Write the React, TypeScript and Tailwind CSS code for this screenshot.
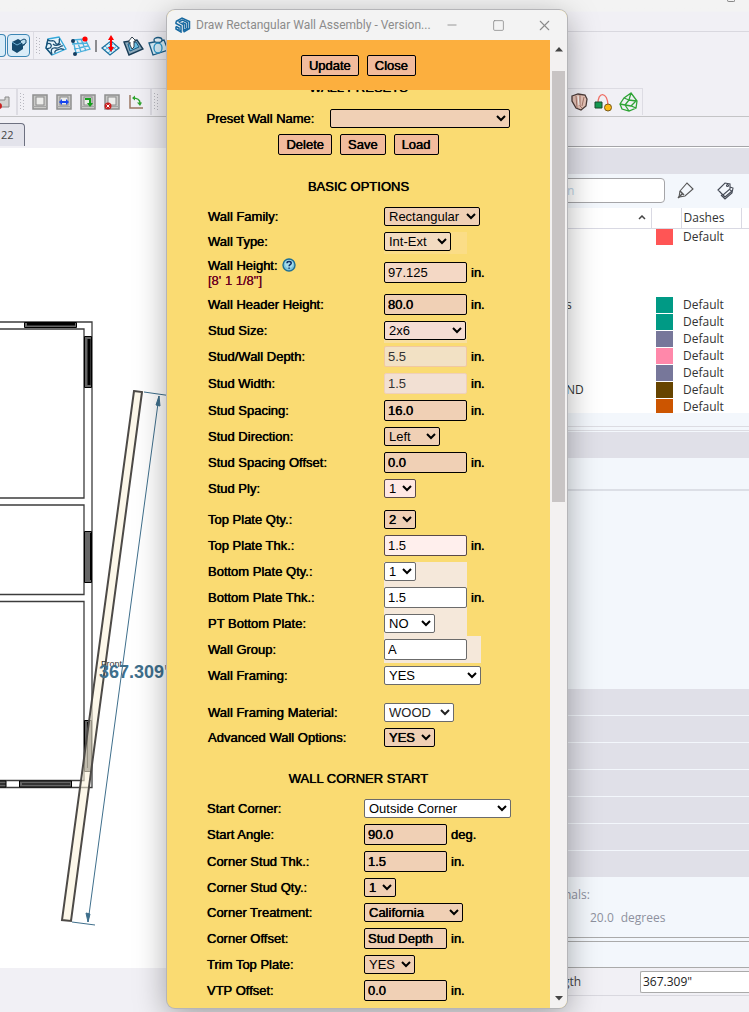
import React from 'react';
import { Minus, Square, X } from 'lucide-react';

type Field = {
  id: string;
  label: string;
  kind: 'select' | 'input';
  value: string;
  look: string;
  unit?: string;
  disabled?: boolean;
  row?: string;
  cell?: string;
};

const PEACH = 'border-black bg-[#f0d0b5]';
const PLAIN = 'border-[#6b6b6b] bg-white';
const HEAVY = 'text-shadow-[0_0_0_#000,0_0_1px_#0008]';

const basicFields: Field[] = [
  { id: 'family', label: 'Wall Family:', kind: 'select', value: 'Rectangular', look: `w-[96px] ${PEACH}` },
  { id: 'type', label: 'Wall Type:', kind: 'select', value: 'Int-Ext', look: 'w-[67px] border-black bg-[#f3dbc1]', cell: 'mt-[3px] items-start w-[83px] bg-[#fbdd87]' },
  { id: 'height', label: 'Wall Height:', kind: 'input', value: '97.125', look: 'border-black bg-[#f4d8c5]', unit: 'in.', row: 'h-[37px]' },
  { id: 'header', label: 'Wall Header Height:', kind: 'input', value: '80.0', look: `${HEAVY} ${PEACH}`, unit: 'in.' },
  { id: 'size', label: 'Stud Size:', kind: 'select', value: '2x6', look: 'w-[82px] border-black bg-[#f5ddd4]', cell: 'mt-[3px] items-start w-[83px] bg-[#f8dfa0]' },
  { id: 'depth', label: 'Stud/Wall Depth:', kind: 'input', value: '5.5', look: 'border-[#f1c8a0] bg-[#f2e1c4] text-[#333]', unit: 'in.', disabled: true },
  { id: 'width', label: 'Stud Width:', kind: 'input', value: '1.5', look: 'border-[#f0d0b8] bg-[#f2e0d3] text-[#333]', unit: 'in.', disabled: true },
  { id: 'spacing', label: 'Stud Spacing:', kind: 'input', value: '16.0', look: `${HEAVY} ${PEACH}`, unit: 'in.' },
  { id: 'direction', label: 'Stud Direction:', kind: 'select', value: 'Left', look: `w-[56px] ${PEACH}` },
  { id: 'offset', label: 'Stud Spacing Offset:', kind: 'input', value: '0.0', look: `${HEAVY} ${PEACH}`, unit: 'in.' },
  { id: 'ply', label: 'Stud Ply:', kind: 'select', value: '1', look: 'w-[32px] border-[#5a4a48] bg-[#ffe8e4]' },
  { id: 'topqty', label: 'Top Plate Qty.:', kind: 'select', value: '2', look: `w-[32px] ${HEAVY} ${PEACH}`, row: 'h-[25px] mt-[6px]' },
  { id: 'topthk', label: 'Top Plate Thk.:', kind: 'input', value: '1.5', look: 'border-[#5a4a48] bg-[#ffefed]', unit: 'in.' },
  { id: 'botqty', label: 'Bottom Plate Qty.:', kind: 'select', value: '1', look: `w-[32px] ${PLAIN}`, cell: 'mt-[3px] items-start w-[83px] bg-[#f5e8da]' },
  { id: 'botthk', label: 'Bottom Plate Thk.:', kind: 'input', value: '1.5', look: PLAIN, unit: 'in.', cell: 'bg-[#f5e8da]' },
  { id: 'pt', label: 'PT Bottom Plate:', kind: 'select', value: 'NO', look: `w-[51px] ${PLAIN}`, cell: 'w-[83px] bg-[#f5e8da]' },
  { id: 'group', label: 'Wall Group:', kind: 'input', value: 'A', look: PLAIN, cell: 'w-[97px] bg-[#f5e8da]' },
  { id: 'framing', label: 'Wall Framing:', kind: 'select', value: 'YES', look: `w-[97px] ${PLAIN}` },
  { id: 'material', label: 'Wall Framing Material:', kind: 'select', value: 'WOOD', look: `w-[70px] text-[#222] ${PLAIN}`, row: 'h-[25px] mt-3' },
  { id: 'advanced', label: 'Advanced Wall Options:', kind: 'select', value: 'YES', look: `w-[51px] ${HEAVY} ${PEACH}` },
];

const cornerFields: Field[] = [
  { id: 'corner', label: 'Start Corner:', kind: 'select', value: 'Outside Corner', look: `w-[147px] ${PLAIN}` },
  { id: 'angle', label: 'Start Angle:', kind: 'input', value: '90.0', look: `${HEAVY} ${PEACH}`, unit: 'deg.' },
  { id: 'cthk', label: 'Corner Stud Thk.:', kind: 'input', value: '1.5', look: `${HEAVY} ${PEACH}`, unit: 'in.' },
  { id: 'cqty', label: 'Corner Stud Qty.:', kind: 'select', value: '1', look: `w-[32px] ${HEAVY} ${PEACH}` },
  { id: 'treatment', label: 'Corner Treatment:', kind: 'select', value: 'California', look: `w-[99px] ${HEAVY} ${PEACH}` },
  { id: 'coffset', label: 'Corner Offset:', kind: 'input', value: 'Stud Depth', look: `${HEAVY} ${PEACH}`, unit: 'in.' },
  { id: 'trim', label: 'Trim Top Plate:', kind: 'select', value: 'YES', look: `w-[51px] ${PEACH}` },
  { id: 'vtp', label: 'VTP Offset:', kind: 'input', value: '0.0', look: `${HEAVY} ${PEACH}`, unit: 'in.' },
];

const HelpIcon = () => (
  <svg width="14" height="14" viewBox="0 0 14 14">
    <circle cx="7" cy="7" r="6" fill="#7fc4dc" stroke="#1f6f93" strokeWidth="1.4" />
    <circle cx="7" cy="6" r="4" fill="#a6dcea" />
    <path d="M5 5.200C5 3 9.200 3 9.200 5.200c0 1.500-2.100 1.500-2.100 3M7.100 9.600v1.200" fill="none" stroke="#0c2c66" strokeWidth="1.500" />
  </svg>
);

const FieldRow: React.FC<{ field: Field; labelWidth: string }> = ({ field, labelWidth }) => {
  const height = field.row ?? (field.kind === 'input' ? 'h-[27px]' : 'h-[25px]');
  return (
    <div className={`flex items-center ${height}`}>
      <div className={`shrink-0 leading-[15px] ${labelWidth}`}>
        <label htmlFor={field.id} className={HEAVY}>{field.label}</label>
        {field.id === 'height' && (
          <>
            <button type="button" aria-label="Help" className="ml-1 align-top"><HelpIcon /></button>
            <div className="text-[#6b0020] text-shadow-[0_0_0_#6b0020]">[8' 1 1/8"]</div>
          </>
        )}
      </div>
      <div className={`flex self-stretch ${field.cell ?? ''} ${field.cell?.includes('items-start') ? '' : 'items-center'}`}>
        {field.kind === 'select' ? (
          <select id={field.id} defaultValue={field.value} className={`h-[19px] rounded-xs border ${field.look}`}>
            <option>{field.value}</option>
          </select>
        ) : (
          <input
            id={field.id}
            type="text"
            defaultValue={field.value}
            disabled={field.disabled}
            className={`h-[21px] w-[83px] rounded-xs border px-[3px] ${field.look}`}
          />
        )}
      </div>
      {field.unit && <span className={`ml-1 ${HEAVY}`}>{field.unit}</span>}
    </div>
  );
};

const FormButton: React.FC<{ children: React.ReactNode }> = ({ children }) => (
  <button type="button" className={`h-[21px] rounded-xs border border-black bg-[#f2bb9c] px-[7px] leading-[19px] ${HEAVY}`}>
    {children}
  </button>
);

const SketchUpLogo = () => (
  <svg width="16" height="16" viewBox="0 0 16 16" fill="none" stroke="#1769a0" strokeWidth="1.500" className="shrink-0">
    <path d="M1 4.500 7 1l7.500 3.500v7L8.500 15" />
    <path d="M1 4.500v2l5 2.500v6L1 12V9.500M3.500 5 7.500 3l5 2.500v6L8.500 13.500v-6L4 5.200" />
    <path d="M7.500 5.500 10.500 7v4.500M1 9.500l3 1.500v2" />
  </svg>
);

const WallDialog = () => (
  <section
    aria-label="Draw Rectangular Wall Assembly"
    className="absolute left-[167px] top-[10px] w-[400px] overflow-hidden rounded-lg bg-[#fadb72] font-['Liberation_Sans',Arial,sans-serif] text-[13px] text-black shadow-[0_0_0_1px_#b5b5b8,0_8px_32px_rgba(0,0,0,0.35)]"
  >
    <header className="flex h-[30px] items-center bg-[#f3f3f3] pl-2 text-[#8b8b8b]">
      <SketchUpLogo />
      <h1 className="ml-[5px] min-w-0 flex-1 whitespace-nowrap font-['Roboto',sans-serif] text-[12px]">Draw Rectangular Wall Assembly - Version...</h1>
      <button type="button" aria-label="Minimize" className="flex w-[46px] shrink-0 justify-center"><Minus size={14} strokeWidth={1.5} /></button>
      <button type="button" aria-label="Maximize" className="flex w-[46px] shrink-0 justify-center"><Square size={13} strokeWidth={1.5} /></button>
      <button type="button" aria-label="Close window" className="flex w-[46px] shrink-0 justify-center"><X size={17} strokeWidth={1.5} /></button>
    </header>

    <div className="flex">
      <form className="min-w-0 flex-1 pb-[4px]">
        <div className="relative flex h-[50px] items-center justify-center gap-2 bg-[#fcaf3e]">
          <FormButton>Update</FormButton>
          <FormButton>Close</FormButton>
        </div>

        {/* the heading is scrolled halfway under the button bar */}
        <div className="overflow-hidden">
          <h2 className={`-mt-3 h-5 text-center leading-5 ${HEAVY}`}>WALL PRESETS</h2>
        </div>
        <div className="mt-2 flex h-[25px] items-center justify-center gap-4">
          <label htmlFor="preset" className={HEAVY}>Preset Wall Name:</label>
          <select id="preset" className="h-[19px] w-[180px] rounded-xs border border-black bg-[#f0d0b5]">
            <option></option>
          </select>
        </div>
        <div className="mt-[3px] flex justify-center gap-2">
          <FormButton>Delete</FormButton>
          <FormButton>Save</FormButton>
          <FormButton>Load</FormButton>
        </div>

        <h2 className={`flex h-[49px] items-center justify-center pt-[14px] ${HEAVY}`}>BASIC OPTIONS</h2>
        <div className="pl-[41px]">
          {basicFields.map((f) => <FieldRow key={f.id} field={f} labelWidth="w-[176px]" />)}
        </div>

        <h2 className={`flex h-[46px] items-center justify-center pt-3 ${HEAVY}`}>WALL CORNER START</h2>
        <div className="pl-[40px]">
          {cornerFields.map((f) => <FieldRow key={f.id} field={f} labelWidth="w-[157px]" />)}
        </div>
      </form>

      {/* Scrollbar */}
      <div className="flex w-[17px] flex-col items-center bg-[#f3f1f1]">
        <div className="flex h-[31px] w-full items-start justify-center pt-[7px]">
          <svg width="8" height="5" viewBox="0 0 8 5"><path d="M0 4.500 4 0l4 4.500z" fill="#444" /></svg>
        </div>
        <div className="h-[431px] w-[13px] bg-[#c8c4c4]"></div>
        <div className="flex flex-1 items-end pb-[7px]">
          <svg width="8" height="5" viewBox="0 0 8 5"><path d="M0 0h8L4 4.500z" fill="#444" /></svg>
        </div>
      </div>
    </div>
  </section>
);

const Grip = () => (
  <svg width="5" height="18" viewBox="0 0 5 18" fill="#b8b8c0" className="shrink-0">
    {[0, 3, 6, 9, 12, 15].map((y) => (
      <g key={y}>
        <rect x="0" y={y} width="1" height="1" />
        <rect x="3" y={y + 1} width="1" height="1" />
      </g>
    ))}
  </svg>
);

const SolidModeIcon = () => (
  <svg width="16" height="16" viewBox="0 0 16 16">
    <path d="M1 4 7 1l3 1.500V5l4-2v4l-2 1v3l-6 4-5-3z" fill="#154a6e" />
    <path d="m1 4 5 3M6 7l4-2" stroke="#6fb2d6" fill="none" />
    <path d="M10 2.500 13 1l2 1v3l-3 2" stroke="#154a6e" fill="#b9dcef" />
  </svg>
);

const ContourIcon = () => (
  <svg width="22" height="20" viewBox="0 0 22 20" fill="none" stroke="#1b4f74" strokeWidth="1.300">
    <path d="M3 3 14 1l7 12L7 19 1 12z" fill="#e7f5fc" stroke="#35a8da" />
    <path d="M3 4c2 2 4 0 6 1s1 4 4 3 0-5 2-5M2 8c3-2 5 1 4 3s-3 1-4 2M7 18c-2-4 0-7 4-6s4-3 7-2M10 17c-1-3 3-3 5-4s3 1 4 0M8 8c3 3 5 1 8 0" />
    <path d="m3 3-2 9 6 7" />
  </svg>
);

const GridIcon = () => (
  <svg width="21" height="20" viewBox="0 0 21 20" fill="none">
    <path d="M3 4 15 3l5 10-14 4zM2 8l15-1M4 13l14-3M7 4l4 12M11 3l5 12" stroke="#4bb0dc" strokeWidth="1.300" />
    <circle cx="3" cy="5" r="2" fill="#143d60" />
    <circle cx="5" cy="18" r="2" fill="#143d60" />
    <circle cx="15" cy="3" r="2.600" fill="#f00" />
  </svg>
);

const SmooveIcon = () => (
  <svg width="19" height="21" viewBox="0 0 19 21" fill="none">
    <path d="m1 13 9-7 8 7-9 7z" fill="#dff2fb" stroke="#1c6f9c" strokeWidth="1.300" />
    <path d="m4 11 8 7M7 8l8 7M4 15l9-7M7 18l9-7" stroke="#43abd8" />
    <path d="m10 0 3 5h-2v7h2l-3 5-3-5h2V5H7z" fill="#f00" />
  </svg>
);

const StampIcon = () => (
  <svg width="21" height="20" viewBox="0 0 21 20">
    <path d="m1 6 13-2 6 9-14 6z" fill="#8da9ba" stroke="#1a3d57" strokeWidth="1.400" />
    <path d="m5 8 2 7 9-4-3-5z" fill="#6ec0e4" stroke="#1b5c85" />
    <path d="M7 9V6H5l4-5 4 4h-2v6l-2 2z" fill="#fff" stroke="#33414d" />
  </svg>
);

const DrapeIcon = () => (
  <svg width="22" height="20" viewBox="0 0 22 20" fill="none" stroke="#1b5c85" strokeWidth="1.300">
    <path d="M2 7 17 4l4 10-15 5z" fill="#d9f0fb" />
    <ellipse cx="11" cy="4" rx="4" ry="2.500" fill="#eef8fd" />
    <ellipse cx="11" cy="12" rx="4" ry="5" stroke="#2a98cc" />
  </svg>
);

// square frame that several of the plugin buttons share
const FrameIcon: React.FC<{ children?: React.ReactNode }> = ({ children }) => (
  <svg width="16" height="16" viewBox="0 0 16 16" fill="none">
    <rect x="1" y="1" width="14" height="14" fill="#c9c9c7" stroke="#8f8f8f" strokeWidth="1.500" />
    <rect x="4" y="3" width="8" height="8" fill="#ececea" stroke="#8a8a8a" />
    <path d="M1 12.500h14" stroke="#a4a4a4" />
    {children}
  </svg>
);

const TopToolbars = () => (
  <div className="border-t border-[#d9d8df] bg-[#f1f0f5]">
    <div className="flex">
      <div className="flex h-[28px] w-[240px] items-center overflow-hidden border-b border-[#d9d8df]">
        <button type="button" aria-label="Style" className="h-[23px] w-[6px] rounded-r border border-l-0 border-[#3c86b4] bg-[#daecf8]"></button>
        <button type="button" aria-label="Shaded" className="ml-[1px] flex h-[23px] w-[23px] items-center justify-center rounded border border-[#3c86b4] bg-[#daecf8]"><SolidModeIcon /></button>
        <span className="ml-[3px] h-full w-px bg-[#dddce3]"></span>
        <span className="ml-[2px]"><Grip /></span>
        <div className="ml-1 flex shrink-0 items-center gap-[3px]">
          <button type="button" aria-label="From Contours"><ContourIcon /></button>
          <button type="button" aria-label="From Scratch"><GridIcon /></button>
          <span className="mx-px h-3 w-[2px] bg-[#8c8c90]"></span>
          <button type="button" aria-label="Smoove"><SmooveIcon /></button>
          <button type="button" aria-label="Stamp"><StampIcon /></button>
          <button type="button" aria-label="Drape"><DrapeIcon /></button>
        </div>
      </div>
    </div>
    <div className="mt-7 flex h-[29px] items-stretch justify-between border-b border-[#c4c4c6] pr-[106px]">
      <div className="flex h-[27px] w-[240px] items-center border-t border-[#dddce3]">
        <button type="button" aria-label="Remove wall">
          <svg width="10" height="16" viewBox="0 0 10 16" fill="none">
            <path d="M0 6h5V3h4v10H0" fill="#d3d3d1" stroke="#8a8a8a" />
            <circle cx="-1" cy="12" r="3" fill="#c92020" />
          </svg>
        </button>
        <span className="ml-[6px] h-full w-[2px] bg-[#dddce3]"></span>
        <span className="ml-[2px]"><Grip /></span>
        <div className="ml-[7px] flex items-center gap-2">
          <button type="button" aria-label="Wall"><FrameIcon /></button>
          <button type="button" aria-label="Stretch wall"><FrameIcon><path d="m3 8 3-3v2h4V5l3 3-3 3V9H6v2z" fill="#1745ee" /></FrameIcon></button>
          <button type="button" aria-label="Move opening"><FrameIcon><path d="M5 4h6v5h2l-3 4-3-4h2V6H5z" fill="#14a01c" /></FrameIcon></button>
          <button type="button" aria-label="Delete opening"><FrameIcon><circle cx="4" cy="12" r="3.500" fill="#c92020" /><path d="m2.500 10.500 3 3m0-3-3 3" stroke="#fff" /></FrameIcon></button>
          <button type="button" aria-label="Rotate">
            <svg width="16" height="16" viewBox="0 0 16 16" fill="none">
              <path d="M2 1v13h13" stroke="#9a7763" strokeWidth="1.500" />
              <path d="M5 4c4 0 7 2 7 5" stroke="#2da52d" strokeWidth="1.500" />
              <path d="M4 4l3-2.500v5zM12 12 9 8.500h5z" fill="#2da52d" />
            </svg>
          </button>
        </div>
        <span className="ml-[6px] h-full w-[2px] bg-[#dddce3]"></span>
        <span className="ml-[2px]"><Grip /></span>
      </div>
      <div className="flex h-[27px] items-center gap-[6px] border-r border-t border-[#dddce3] pl-6 pr-1">
        <button type="button" aria-label="Shell">
          <svg width="18" height="18" viewBox="0 0 18 18">
            <path d="m2 3 6-2 7 1 2 4-1 7-5 4-5-2-4-7z" fill="#e8c5b8" stroke="#4b3b38" strokeWidth="1.300" />
            <path d="m6 3 1 12M10 2v11l2 2M14 4l-2 9" fill="none" stroke="#a8796d" />
            <path d="m8 3 1 9" stroke="#fff" />
          </svg>
        </button>
        <button type="button" aria-label="Path">
          <svg width="19" height="19" viewBox="0 0 19 19" fill="none">
            <path d="M4 12C3-2 14-2 14 13" stroke="#ef7168" strokeWidth="1.300" />
            <path d="M1 9h7v6H1z" fill="#169a52" stroke="#1c4a2f" />
            <circle cx="14" cy="14.500" r="3.500" fill="#fdb813" stroke="#76591a" />
          </svg>
        </button>
        <button type="button" aria-label="Mesh">
          <svg width="19" height="20" viewBox="0 0 19 20" fill="none" stroke="#2fa336" strokeWidth="1.300">
            <path d="M12 1 5 6 1 12l2 5 7 2 7-3 1-7zM12 1l-2 7-5-2M10 8l7 1M10 8l-4 5-5-1M6 13l4 6M6 13l6 1 5 2M12 14l5-5" />
          </svg>
        </button>
      </div>
    </div>
  </div>
);

const ModelDrawing = () => (
  <svg width="100%" height="100%" className="absolute inset-0">
    <g transform="translate(0 -148)" fill="none">
      {/* house walls */}
      <g stroke="#3c3c3c" strokeWidth="1.300">
        <path d="M0 322H92V787.500H0" />
        <path d="M0 329H84V498H0M0 505H84V594.500H0M0 601.500H84V780.500H0" />
      </g>
      {/* windows */}
      <g stroke="#000" fill="#666">
        <path d="M24.500 322.500h52v5h-52z" />
        <path d="M27 324h48" strokeWidth="3" />
        <path d="M84.500 336.500h7v51h-7z" />
        <path d="M89 339v46" strokeWidth="3" />
        <path d="M84.500 531.500h7v51h-7zM84.500 720.500h7v51h-7z" />
        <path d="M90.500 533v47M87.500 722v46" />
        <path d="M19.500 781h52v6h-52zM-2 781h8v6h-8z" />
        <path d="M22 784h48M0 784h6" />
      </g>
      {/* selected wall */}
      <path d="m134 391 8 1L71 921l-9-1z" fill="#fbf3dc" fillOpacity="0.600" stroke="#4d4a47" strokeWidth="2" />
      {/* dimension */}
      <g stroke="#3f6f8c">
        <path d="m144 392 28 4M72 922l23 3M159 396 88 922" />
        <path d="m159 396-3 9 4 1zM88 922l-2-9 4 1z" fill="#3f6f8c" />
      </g>
      <text x="101" y="667" fill="#333" className="font-['Liberation_Sans',Arial,sans-serif] text-[9px]">Front</text>
      <text x="99" y="678" fill="#3f6f8c" stroke="none" className="font-['Liberation_Sans',Arial,sans-serif] text-[18px] font-bold">367.309"</text>
    </g>
  </svg>
);

const tagRows = [
  { name: '', color: 'bg-[#ff5555]' },
  { name: '', color: '' },
  { name: '', color: '' },
  { name: '', color: '' },
  { name: 's', color: 'bg-[#009a85]' },
  { name: '', color: 'bg-[#009a85]' },
  { name: '', color: 'bg-[#77779a]' },
  { name: '', color: 'bg-[#ff88aa]' },
  { name: '', color: 'bg-[#77779a]' },
  { name: 'ND', color: 'bg-[#664400]' },
  { name: '', color: 'bg-[#cc5500]' },
];

const Tray = () => (
  <aside className="flex w-[217px] shrink-0 flex-col bg-[#f3f7fc] text-[12px] text-[#333]">
    <div className="h-[26px] bg-[#e0e0e8]"></div>
    <div className="flex h-[34px] items-start pt-[4px]">
      <input aria-label="Search tags" placeholder="n" className="h-[25px] w-[133px] rounded-sm border border-[#a5a5a8] bg-white pl-[34px] placeholder:text-[#bcd3e6]" />
      <button type="button" aria-label="Add tag" className="ml-3 mt-1">
        <svg width="17" height="17" viewBox="0 0 17 17" fill="none" stroke="#555" strokeWidth="1.100">
          <path d="m3 9 7-8 6 6-8 7-6 1z" /><path d="m1 16 4-4m-2-3 4 4" strokeWidth="1.500" />
        </svg>
      </button>
      <button type="button" aria-label="Add tag folder" className="ml-[23px] mt-1">
        <svg width="17" height="18" viewBox="0 0 17 18" fill="none" stroke="#444a55" strokeWidth="1.100">
          <path d="m1 8 7-7 5 1v5l-7 6zM13 5l3 1-1 5-7 6-4-4M13 8l2 1-7 6M3 10l5 5" /><circle cx="10.500" cy="3.500" r="1" />
        </svg>
      </button>
    </div>
    <div className="h-[205px] overflow-hidden bg-white">
      <table className="w-full table-fixed border-collapse text-left leading-[16px]">
        <colgroup>
          <col className="w-[119px]" />
          <col className="w-[30px]" />
          <col className="w-[60px]" />
          <col />
        </colgroup>
        <thead>
          <tr className="h-[20px] border-b border-[#d9d9e3]">
            <th scope="col" aria-label="Name" className="border-r border-[#d9d9e3] p-0 pr-[5px]">
              <svg width="8" height="5" viewBox="0 0 8 5" fill="none" stroke="#444" strokeWidth="1.500" className="ml-auto"><path d="m1 4 3-3 3 3" /></svg>
            </th>
            <th scope="col" aria-label="Color" className="border-r border-[#d9d9e3] p-0"></th>
            <th scope="col" className="border-r border-[#d9d9e3] p-0 pl-[2px] font-normal">Dashes</th>
            <th scope="col" aria-label="Visible" className="p-0"></th>
          </tr>
        </thead>
        <tbody>
          {tagRows.map((tag, i) => (
            <tr key={i} className="h-[17px]">
              <td className="p-0 pl-[34px]">{tag.name}</td>
              <td className="p-0 pl-[5px]"><div className={`h-4 w-[17px] ${tag.color}`}></div></td>
              <td className="p-0 pl-[2px]">{tag.color && 'Default'}</td>
              <td className="p-0"></td>
            </tr>
          ))}
        </tbody>
      </table>
    </div>
    <div className="mt-[13px] h-[5px] border-y border-[#dcdce2]"></div>
    <div className="mt-[1px] h-[26px] bg-[#e0e0e8]"></div>
    <div className="h-[33px] border-b-2 border-[#dcdfe6]"></div>
    <div className="mt-[198px] flex flex-col gap-px">
      {[1, 2, 3, 4, 5, 6, 7].map((n) => <div key={n} className="h-[26px] bg-[#e0e0e8]"></div>)}
    </div>
    <div className="h-[61px] border-b border-[#aaa] pl-[32px] pt-[6px] leading-[23px] text-[#8e919e]">
      <div>nals:</div>
      <div className="flex gap-[7px] pl-[26px]"><span>20.0</span><span>degrees</span></div>
    </div>
    <div className="mt-[3px] h-[27px] border-y border-[#aaa]"></div>
  </aside>
);

export default function App() {
  return (
    <div className="relative overflow-hidden bg-[#f1f0f5] font-['Open_Sans',sans-serif]">
      <div className="flex h-[31px] justify-end bg-linear-to-b from-[#f3f3f3] from-35% to-[#f1f0f5] to-40% pr-[14px]">
        <span className="h-[2px] w-2 rounded-b-xs border border-t-0 border-[#888]"></span>
      </div>
      <TopToolbars />
      <div className="flex h-[31px] items-end justify-between">
        <button type="button" className="mb-[2px] h-[23px] w-[25px] rounded-tr-sm border-r border-t border-[#6d7080] bg-[#e3e3eb] pl-[1px] text-left text-[11px] text-[#444]">22</button>
        <span className="h-[2px] w-[217px] border-t border-[#a5a5a8] bg-white"></span>
      </div>
      <main className="flex">
        <div className="relative flex-1 bg-white"><ModelDrawing /></div>
        <Tray />
      </main>
      <footer className="flex h-[44px] items-start justify-end">
        <div className="flex h-[28px] w-[217px] items-center border-b border-[#d9d8df] text-[12px] text-[#444]">
          <label htmlFor="length" className="w-[108px] pl-[31px]">gth</label>
          <input id="length" defaultValue={'367.309"'} className="h-[22px] min-w-0 flex-1 rounded-l-xs border border-r-0 border-[#aaa] bg-white px-[2px] text-[#222]" />
        </div>
      </footer>
      <WallDialog />
    </div>
  );
}
